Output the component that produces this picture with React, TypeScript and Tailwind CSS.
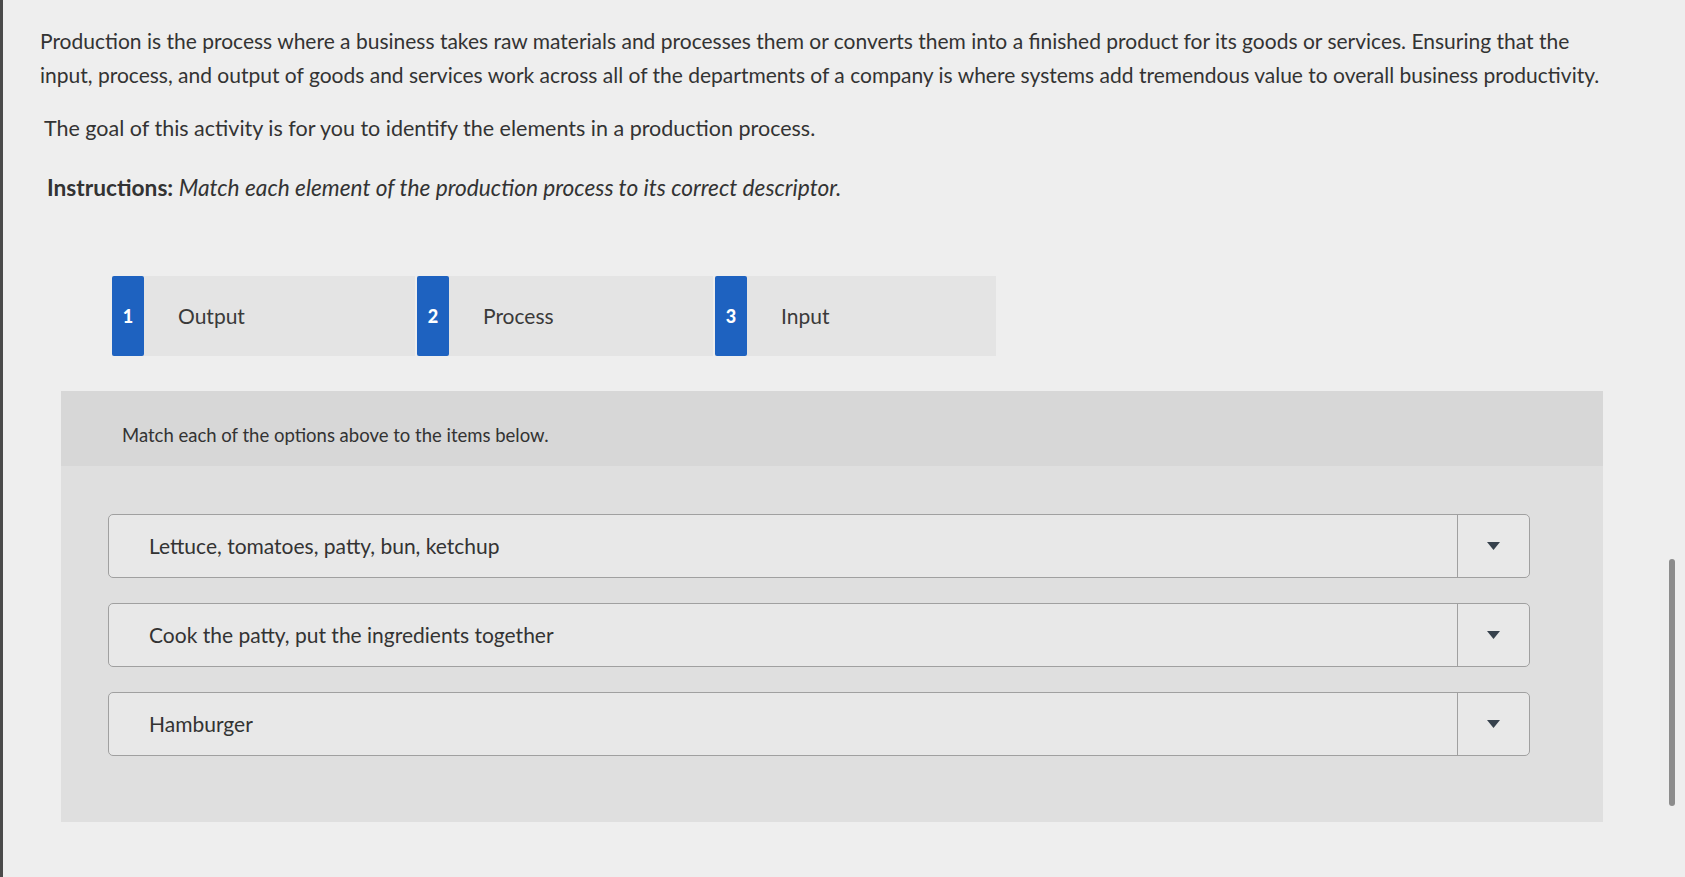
const OPTIONS = [
  { n: 1, label: "Output", w: "w-[303px]" },
  { n: 2, label: "Process", w: "w-[296px]" },
  { n: 3, label: "Input", w: "w-[281px]" },
];

const ITEMS = [
  "Lettuce, tomatoes, patty, bun, ketchup",
  "Cook the patty, put the ingredients together",
  "Hamburger",
];

function OptionCard({ n, label, w }: { n: number; label: string; w: string }) {
  return (
    <div className={`flex h-[80px] bg-[#e4e4e4] ${w}`}>
      <div className="flex w-[32px] items-center justify-center rounded-[2px] bg-[#1e62c0] text-[18px] font-black text-white">
        {n}
      </div>
      <div className="flex items-center pl-[34px] text-[21px] text-[#3a3a3a]">
        {label}
      </div>
    </div>
  );
}

function MatchRow({ text }: { text: string }) {
  return (
    <div className="flex h-[64px] rounded-[5px] border border-[#a0a0a0] bg-[#e8e8e8]">
      <div className="flex flex-1 items-center pl-[40px] text-[21px] text-[#333]">
        {text}
      </div>
      <div className="flex w-[72px] items-center justify-center border-l border-[#a0a0a0]">
        <svg width="13" height="8" viewBox="0 0 13 8">
          <path d="M0 0h13L6.5 8z" fill="#36414c" />
        </svg>
      </div>
    </div>
  );
}

export default function App() {
  return (
    <div
      className="flex h-[877px] w-[1685px] overflow-hidden border-l-[3px] border-[#4a4a4a] bg-[#eeeeee] text-[#333]"
      style={{ fontFamily: "Lato, 'Liberation Sans', sans-serif" }}
    >
      <div className="flex-1 pl-[37px] pt-[24px]">
        <p className="whitespace-nowrap text-[21px] leading-[34px]">
          Production is the process where a business takes raw materials and processes them or converts them into a finished product for its goods or services. Ensuring that the
          <br />
          input, process, and output of goods and services work across all of the departments of a company is where systems add tremendous value to overall business productivity.
        </p>
        <p className="mt-[19px] pl-[4px] text-[21.5px] leading-[34px]">
          The goal of this activity is for you to identify the elements in a production process.
        </p>
        <p className="mt-[26px] pl-[7px] text-[22.7px] leading-[34px]">
          <span className="font-bold">Instructions: </span>
          <span className="italic">Match each element of the production process to its correct descriptor.</span>
        </p>

        <div className="mt-[71px] ml-[72px] flex gap-[2px]">
          {OPTIONS.map((o) => (
            <OptionCard key={o.n} n={o.n} label={o.label} w={o.w} />
          ))}
        </div>

        <div className="mt-[35px] ml-[21px] w-[1542px] bg-[#dfdfdf] pb-[66px]">
          <div className="flex h-[75px] items-center bg-[#d7d7d7] pl-[61px] pt-[14px] text-[18.5px] text-[#333]">
            Match each of the options above to the items below.
          </div>
          <div className="mt-[48px] flex flex-col gap-[25px] pl-[47px] pr-[73px]">
            {ITEMS.map((t) => (
              <MatchRow key={t} text={t} />
            ))}
          </div>
        </div>
      </div>

      <div className="w-[16px] pt-[559px]">
        <div className="h-[247px] w-[6px] rounded-full bg-[#8c8c8c]" />
      </div>
    </div>
  );
}
